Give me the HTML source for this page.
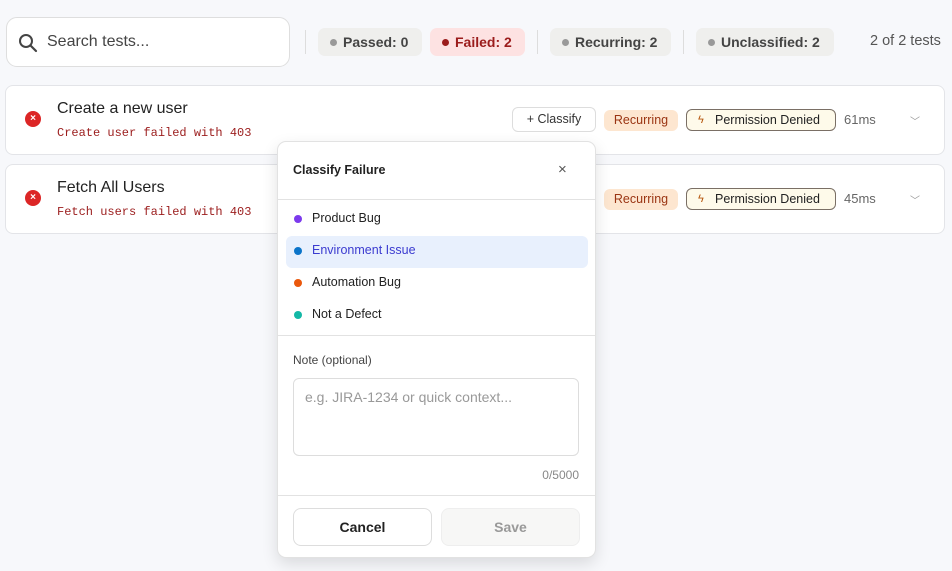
<!DOCTYPE html>
<html><head><style>
*{box-sizing:border-box;margin:0;padding:0}
body{width:952px;height:571px;background:#f7f8fb;font-family:"Liberation Sans",sans-serif;color:#1f1f1f;position:relative;overflow:hidden}
.abs{position:absolute}
.search{left:6px;top:17px;width:284px;height:50px;background:#fff;border:1px solid #dedede;border-radius:11px}
.search span{position:absolute;left:40px;top:15px;font-size:16px;color:#444}
.sep{width:1px;height:24px;top:30px;background:#ddd}
.chip{top:28px;height:28px;border-radius:7px;background:#efefed;font-size:14px;font-weight:bold;color:#444;line-height:28px;padding-left:25px}
.chip:before{content:"";position:absolute;left:12px;top:11px;width:7px;height:7px;border-radius:50%;background:#999}
.card{left:5px;width:940px;height:70px;background:#fff;border:1px solid #e3e4e8;border-radius:8px}
.xic{left:25px;width:16px;height:16px;border-radius:50%;background:#dc2626;color:#fff;font-size:10px;line-height:16px;text-align:center;font-weight:bold}
.title{left:57px;font-size:16px;color:#222}
.err{left:57px;font-family:"Liberation Mono",monospace;font-size:12px;color:#9b1c1c}
.rec{left:604px;width:74px;height:21px;background:#fde6d0;color:#9a3412;border-radius:6px;font-size:12.5px;line-height:21px;text-align:center}
.perm{left:686px;width:150px;height:22px;background:#fefaea;border:1px solid #7a6f65;border-radius:6px;font-size:12.5px;line-height:20px;padding-left:28px;color:#222}
.perm b{position:absolute;left:11px;top:0;font-weight:normal;color:#b45309;font-size:11px}
.ms{left:844px;font-size:13px;color:#666}
.chev{left:910px;font-size:10px;color:#999}
.pop{left:277px;top:141px;width:319px;height:417px;background:#fff;border:1px solid #e2e2e2;border-radius:9px;box-shadow:0 6px 16px rgba(0,0,0,.12)}
.hr{left:0;width:317px;height:1px;background:#e2e2e2}
.it{left:34px;font-size:12.5px;color:#222}
.dot{left:16px;width:8px;height:8px;border-radius:50%}
.btn{top:366px;height:38px;border-radius:8px;font-size:14px;font-weight:bold;text-align:center;line-height:36px}
</style></head><body>
<div class="abs search"><svg class="abs" style="left:11px;top:15px" width="20" height="20" viewBox="0 0 20 20"><circle cx="8" cy="8" r="6" fill="none" stroke="#444" stroke-width="2"/><path d="M12.5 12.5L18 18" stroke="#444" stroke-width="2.2" stroke-linecap="round"/></svg><span>Search tests...</span></div>
<div class="abs sep" style="left:305px"></div>
<div class="abs chip" style="left:318px;width:104px">Passed: 0</div>
<div class="abs chip" style="left:430px;width:95px;background:#fde2e2;color:#9b1c1c">Failed: 2</div>
<style>.chip:nth-of-type(4):before{}</style>
<div class="abs sep" style="left:537px"></div>
<div class="abs chip" style="left:550px;width:121px">Recurring: 2</div>
<div class="abs sep" style="left:683px"></div>
<div class="abs chip" style="left:696px;width:138px">Unclassified: 2</div>
<div class="abs" style="left:870px;top:33px;font-size:14.5px;color:#555">2 of 2 tests</div>

<div class="abs card" style="top:85px"></div>
<div class="abs xic" style="top:111px">×</div>
<div class="abs title" style="top:100px">Create a new user</div>
<div class="abs err" style="top:126px">Create user failed with 403</div>
<div class="abs" style="left:512px;top:107px;width:84px;height:25px;border:1px solid #ddd;border-radius:6px;background:#fff;font-size:12.5px;line-height:23px;text-align:center;color:#333">+ Classify</div>
<div class="abs rec" style="top:110px">Recurring</div>
<div class="abs perm" style="top:109px"><b>ϟ</b>Permission Denied</div>
<div class="abs ms" style="top:112px">61ms</div>
<div class="abs chev" style="top:113px">﹀</div>

<div class="abs card" style="top:164px"></div>
<div class="abs xic" style="top:190px">×</div>
<div class="abs title" style="top:179px">Fetch All Users</div>
<div class="abs err" style="top:205px">Fetch users failed with 403</div>
<div class="abs rec" style="top:189px">Recurring</div>
<div class="abs perm" style="top:188px"><b>ϟ</b>Permission Denied</div>
<div class="abs ms" style="top:191px">45ms</div>
<div class="abs chev" style="top:192px">﹀</div>

<style>.chip:nth-child(4):before{background:#9b1c1c}</style>
<div class="abs pop">
 <div class="abs" style="left:15px;top:21px;font-size:12.5px;font-weight:bold;color:#222">Classify Failure</div>
 <div class="abs" style="left:280px;top:19px;font-size:15px;color:#555">×</div>
 <div class="abs hr" style="top:57px"></div>
 <div class="abs dot" style="top:73px;background:#7c3aed"></div><div class="abs it" style="top:69px">Product Bug</div>
 <div class="abs" style="left:8px;top:94px;width:302px;height:32px;background:#e8f0fd;border-radius:6px"></div>
 <div class="abs dot" style="top:105px;background:#0b74c9"></div><div class="abs it" style="top:101px;color:#3b3bd0">Environment Issue</div>
 <div class="abs dot" style="top:137px;background:#ea580c"></div><div class="abs it" style="top:133px">Automation Bug</div>
 <div class="abs dot" style="top:169px;background:#14b8a6"></div><div class="abs it" style="top:165px">Not a Defect</div>
 <div class="abs hr" style="top:193px"></div>
 <div class="abs" style="left:15px;top:211px;font-size:12px;color:#444">Note (optional)</div>
 <div class="abs" style="left:15px;top:236px;width:286px;height:78px;border:1px solid #ddd;border-radius:6px"></div>
 <div class="abs" style="left:27px;top:247px;font-size:14px;color:#999">e.g. JIRA-1234 or quick context...</div>
 <div class="abs" style="right:16px;top:326px;font-size:12px;color:#888">0/5000</div>
 <div class="abs hr" style="top:353px"></div>
 <div class="abs btn" style="left:15px;width:139px;border:1px solid #ddd;color:#222">Cancel</div>
 <div class="abs btn" style="left:163px;width:139px;border:1px solid #eee;background:#f7f7f6;color:#999">Save</div>
</div>
</body></html>
